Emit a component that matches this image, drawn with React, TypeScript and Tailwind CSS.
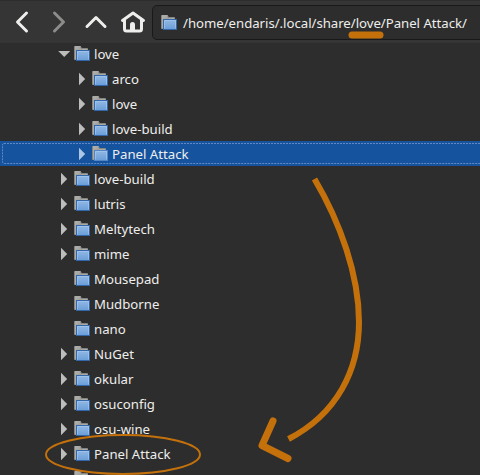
type Row = {
  name: string;
  depth: 0 | 1;
  arrow?: 'open' | 'closed';
  selected?: boolean;
};

const rows: Row[] = [
  { name: 'love', depth: 0, arrow: 'open' },
  { name: 'arco', depth: 1, arrow: 'closed' },
  { name: 'love', depth: 1, arrow: 'closed' },
  { name: 'love-build', depth: 1, arrow: 'closed' },
  { name: 'Panel Attack', depth: 1, arrow: 'closed', selected: true },
  { name: 'love-build', depth: 0, arrow: 'closed' },
  { name: 'lutris', depth: 0, arrow: 'closed' },
  { name: 'Meltytech', depth: 0, arrow: 'closed' },
  { name: 'mime', depth: 0, arrow: 'closed' },
  { name: 'Mousepad', depth: 0 },
  { name: 'Mudborne', depth: 0 },
  { name: 'nano', depth: 0 },
  { name: 'NuGet', depth: 0, arrow: 'closed' },
  { name: 'okular', depth: 0, arrow: 'closed' },
  { name: 'osuconfig', depth: 0, arrow: 'closed' },
  { name: 'osu-wine', depth: 0, arrow: 'closed' },
  { name: 'Panel Attack', depth: 0, arrow: 'closed' },
  { name: '', depth: 0 },
];

function FolderIcon({ selected }: { selected?: boolean }) {
  return (
    <svg width="16" height="16" viewBox="0 0 16 16" className="shrink-0">
      <defs>
        <linearGradient id="folder-front" x1="0" y1="0" x2="0" y2="1">
          <stop offset="0" stopColor="#93b9e4" />
          <stop offset="1" stopColor="#6a9dd8" />
        </linearGradient>
        <linearGradient id="folder-back" x1="0" y1="0" x2="1" y2="1">
          <stop offset="0" stopColor="#b4b4b1" />
          <stop offset="1" stopColor="#777775" />
        </linearGradient>
      </defs>
      <path d="M.5 13.5V.5h6l1 2h6v11z" fill="url(#folder-back)" stroke="#858583" />
      <path d="M1 .5h5.500M1.500 1.500v12M7.500 3.500h6" stroke="#aaaaa7" />
      <rect x="2.500" y="4.500" width="13" height="10" fill="url(#folder-front)" stroke={selected ? '#5486c4' : '#3467a8'} />
      <path d="M3.500 13.500v-8h11v8" fill="none" stroke="#a8c8ee" strokeOpacity="0.65" />
    </svg>
  );
}

function Expander({ state, selected }: { state?: 'open' | 'closed'; selected?: boolean }) {
  return (
    <svg width="12" height="14" viewBox="0 0 12 14" className="shrink-0">
      {state === 'closed' && <path d="M3 .8 9.200 7 3 13.200z" fill={selected ? '#adc6e3' : '#bdbdbd'} />}
      {state === 'open' && <path d="M.2 4h12L6.200 10z" fill="#bdbdbd" />}
    </svg>
  );
}

function TreeRow({ row }: { row: Row }) {
  return (
    <div className={`relative flex h-[25px] shrink-0 items-center ${row.depth ? 'pl-[76px]' : 'pl-[58px]'} ${row.selected ? 'bg-[#15539e]' : ''}`}>
      {row.selected && (
        <svg className="absolute inset-0" width="480" height="25">
          <rect x="2.5" y="2.5" width="490" height="20" rx="1.5" fill="none" stroke="#7699c8" strokeDasharray="2 1" strokeOpacity="0.8" />
        </svg>
      )}
      <Expander state={row.arrow} selected={row.selected} />
      <div className="ml-1 flex items-center gap-1">
        <FolderIcon selected={row.selected} />
        <span className="whitespace-pre leading-[18px]">{row.name}</span>
      </div>
    </div>
  );
}

function Toolbar() {
  return (
    <header className="flex h-[43px] shrink-0 border-t border-[#2d2d2d] bg-[#353535]">
      <svg width="152" height="42" viewBox="0 1 152 42" fill="none" stroke="#eeeeec" strokeWidth="3" strokeLinecap="round" strokeLinejoin="round" className="shrink-0">
        <path d="M26.500 13 17.500 22l9 9" />
        <path d="M54.500 13 63.500 22l-9 9" stroke="#8c8c8b" />
        <path d="M87 26.500 96 17.500l9 9" />
        <path d="M122.500 20.500 133 13l10.500 7.500M124.500 20v9q0 2 2 2h13q2 0 2-2v-9" />
        <path d="M130 31v-6.500q0-2.500 2.500-2.500t2.500 2.500V31z" fill="#eeeeec" stroke="none" />
      </svg>
      <div className="mt-1 flex h-[35px] w-[340px] shrink-0 items-center gap-1.5 rounded-[5px] border border-[#191919] bg-[#2d2d2d] pl-2">
        <FolderIcon />
        <span className="whitespace-pre pt-0.5 tracking-[-0.02px]">/home/endaris/.local/share/love/Panel Attack/</span>
      </div>
    </header>
  );
}

function Annotations() {
  return (
    <svg className="pointer-events-none absolute inset-0" width="480" height="475" fill="none" stroke="#c4710c">
      <path d="M352 35h28" strokeWidth="7" strokeLinecap="round" />
      <path d="M314.500 179C340 222 359 275 359 322C359 370 337 414 288.500 439" strokeWidth="6" />
      <path d="M273 421 262 445.500 288 458.500" strokeWidth="7" strokeLinecap="round" strokeLinejoin="round" />
      <ellipse cx="123" cy="454.500" rx="77" ry="19.500" strokeWidth="2" />
    </svg>
  );
}

export default function App() {
  return (
    <div className="relative flex h-[475px] w-[480px] flex-col overflow-hidden bg-[#2d2d2d] font-['Noto_Sans',sans-serif] text-[13.2px] text-[#eeeeec]">
      <Toolbar />
      <main className="min-h-0 flex-1 overflow-hidden">
        <div className="-mt-[2px] flex flex-col">
          {rows.map((row, i) => (
            <TreeRow key={i} row={row} />
          ))}
        </div>
      </main>
      <Annotations />
    </div>
  );
}
